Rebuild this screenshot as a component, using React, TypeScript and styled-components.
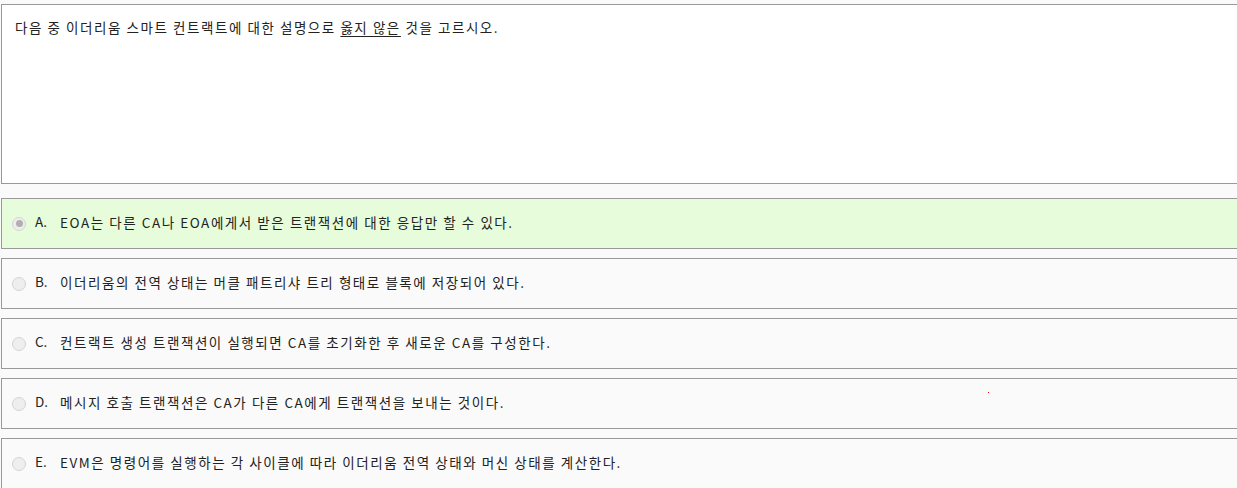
import React from "react";
import styled, { createGlobalStyle } from "styled-components";

const options = [
  { label: "A.", text: "EOA는 다른 CA나 EOA에게서 받은 트랜잭션에 대한 응답만 할 수 있다.", checked: true },
  { label: "B.", text: "이더리움의 전역 상태는 머클 패트리샤 트리 형태로 블록에 저장되어 있다." },
  { label: "C.", text: "컨트랙트 생성 트랜잭션이 실행되면 CA를 초기화한 후 새로운 CA를 구성한다." },
  { label: "D.", text: "메시지 호출 트랜잭션은 CA가 다른 CA에게 트랜잭션을 보내는 것이다." },
  { label: "E.", text: "EVM은 명령어를 실행하는 각 사이클에 따라 이더리움 전역 상태와 머신 상태를 계산한다." },
];

const App: React.FC = () => {
  return (
    <Page>
      <GlobalStyle />
      <Question>
        다음 중 이더리움 스마트 컨트랙트에 대한 설명으로 <u>옳지 않은</u> 것을 고르시오.
      </Question>
      <OptionList>
        {options.map((o) => (
          <Option key={o.label} selected={!!o.checked}>
            <Radio checked={!!o.checked} />
            <Label>{o.label}</Label>
            <Text>{o.text}</Text>
          </Option>
        ))}
      </OptionList>
      <Dot />
    </Page>
  );
};

const GlobalStyle = createGlobalStyle`
  html, body {
    margin: 0;
    background: #fafafa;
    overflow: hidden;
  }
  body {
    font-family: "Noto Sans CJK KR", "Noto Sans", sans-serif;
    font-size: 13.5px;
    letter-spacing: 1.55px;
    color: #222;
  }
`;

const Page = styled.div`
  position: relative;
  width: 1260px;
  padding: 4px 0 0 1px;
  display: flex;
  flex-direction: column;
  gap: 14px;
`;

const Question = styled.div`
  box-sizing: content-box;
  border: 1px solid #999;
  background: #fff;
  padding: 13px 0 0 13px;
  height: 165px;
  line-height: 18px;
  u {
    text-underline-offset: 3px;
  }
`;

const OptionList = styled.div`
  display: flex;
  flex-direction: column;
  gap: 9px;
`;

const Option = styled.div<{ selected: boolean }>`
  height: 49px;
  border: 1px solid #999;
  background: ${(p) => (p.selected ? "#e6fcdb" : "#fafafa")};
  display: flex;
  align-items: center;
  padding-left: 10px;
  line-height: 18px;
`;

const Radio = styled.span<{ checked: boolean }>`
  width: 12px;
  height: 12px;
  border-radius: 50%;
  border: 1px solid #d4d4d4;
  background: #eeeeee;
  display: flex;
  align-items: center;
  justify-content: center;
  margin-right: 9px;
  &::after {
    content: "";
    display: ${(p) => (p.checked ? "block" : "none")};
    width: 7px;
    height: 7px;
    border-radius: 50%;
    background: #b0b0b0;
  }
`;

const Label = styled.span`
  width: 25px;
  margin-top: -5px;
  letter-spacing: 0;
`;

const Text = styled.span`
  margin-top: -3px;
`;

const Dot = styled.div`
  position: absolute;
  left: 988px;
  top: 392px;
  width: 1px;
  height: 1px;
  background: #f00;
`;

export default App;
